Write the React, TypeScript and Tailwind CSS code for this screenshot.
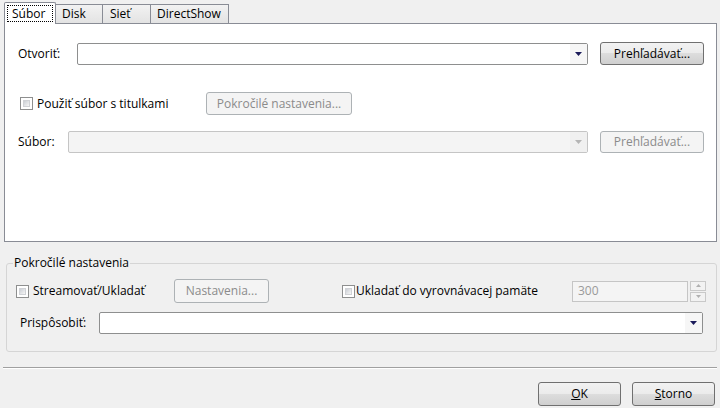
import React from "react";

const font = { fontFamily: '"Open Sans", "Noto Sans", sans-serif' };

function Arrow({ disabled }: { disabled?: boolean }) {
  return (
    <svg width="7" height="4" viewBox="0 0 7 4">
      <path d="M0 0H7L3.5 4Z" fill={disabled ? "#b5b5b5" : "#1b1b5a"} />
    </svg>
  );
}

function Combo({ w, disabled }: { w: string; disabled?: boolean }) {
  return (
    <div
      className={`${w} h-[22px] flex rounded-[2px] border ${
        disabled ? "border-[#c5c5c5] bg-[#f4f4f4]" : "border-[#8e8f8f] bg-white"
      }`}
    >
      <div className="flex-1" />
      <div
        className={`w-[17px] flex items-center justify-center ${
          disabled ? "bg-[#f0f0f0]" : "bg-[#f6f6f6]"
        }`}
      >
        <Arrow disabled={disabled} />
      </div>
    </div>
  );
}

function Btn({
  w,
  h = "h-[23px]",
  disabled,
  children,
}: {
  w: string;
  h?: string;
  disabled?: boolean;
  children: React.ReactNode;
}) {
  return (
    <div
      className={`${w} ${h} flex items-center justify-center rounded-[3px] border text-[12px] ${
        disabled
          ? "border-[#adb2b5] bg-[#f4f4f4] text-[#8b8b8b]"
          : "border-[#707070] bg-[linear-gradient(#f2f2f2_0%,#ebebeb_50%,#dddddd_50%,#cfcfcf_100%)] text-black"
      }`}
    >
      {children}
    </div>
  );
}

function Check() {
  return (
    <div className="w-[13px] h-[13px] border border-[#8e8f8f] bg-white p-[2px]">
      <div className="w-full h-full bg-[linear-gradient(135deg,#cbcfd5,#f6f6f6)] border border-[#d0d2d6]" />
    </div>
  );
}

export default function App() {
  return (
    <div
      className="w-[720px] h-[408px] bg-[#f0f0f0] text-black text-[12px] leading-none flex flex-col"
      style={font}
    >
      {/* tabs */}
      <div className="flex items-end pl-[4px] pt-[2px] h-[23px]">
        <div className="w-[52px] h-[22px] bg-white border border-b-0 border-[#898c95] rounded-t-[2px] px-[2px] pt-[2px] relative z-10 -mb-px">
          <div className="h-[17px] border border-dotted border-black flex items-center pl-[4px]">
            Súbor
          </div>
        </div>
        <div className="w-[47px] h-[19px] bg-[linear-gradient(#f2f2f2,#e3e3e3)] border border-[#898c95] border-l-0 border-b-0 flex items-center pl-[6px]">
          Disk
        </div>
        <div className="w-[48px] h-[19px] bg-[linear-gradient(#f2f2f2,#e3e3e3)] border border-[#898c95] border-l-0 border-b-0 flex items-center pl-[7px]">
          Sieť
        </div>
        <div className="w-[78px] h-[19px] bg-[linear-gradient(#f2f2f2,#e3e3e3)] border border-[#898c95] border-l-0 border-b-0 flex items-center pl-[6px]">
          DirectShow
        </div>
      </div>

      {/* panel */}
      <div className="ml-[4px] mr-[3px] h-[219px] bg-white border border-[#898c95] flex flex-col">
        <div className="flex items-center mt-[18px] pl-[13px]">
          <span className="w-[59px]">Otvoriť:</span>
          <Combo w="w-[511px]" />
          <div className="ml-[12px]">
            <Btn w="w-[104px]">Prehľadávať...</Btn>
          </div>
        </div>
        <div className="flex items-center mt-[27px] pl-[15px]">
          <Check />
          <span className="ml-[4px] w-[169px]">Použiť súbor s titulkami</span>
          <Btn w="w-[146px]" disabled>
            Pokročilé nastavenia...
          </Btn>
        </div>
        <div className="flex items-center mt-[16px] pl-[13px]">
          <span className="w-[50px]">Súbor:</span>
          <Combo w="w-[520px]" disabled />
          <div className="ml-[12px]">
            <Btn w="w-[104px]" h="h-[22px]" disabled>
              Prehľadávať...
            </Btn>
          </div>
        </div>
      </div>

      {/* group box */}
      <fieldset className="ml-[6px] mr-[3px] mt-[14px] h-[96px] border border-[#d5d5d5] rounded-[3px] pl-[9px] pr-[10px]">
        <legend className="px-[1px] -ml-[3px] text-[12px] leading-[14px]">Pokročilé nastavenia</legend>
        <div className="flex items-center mt-[9px]">
          <Check />
          <span className="ml-[4px] w-[141px]">Streamovať/Ukladať</span>
          <Btn w="w-[95px]" h="h-[24px]" disabled>
            Nastavenia...
          </Btn>
          <div className="ml-[73px] flex items-center">
            <Check />
            <span className="ml-[1px] w-[216px]">Ukladať do vyrovnávacej pamäte</span>
          </div>
          <div className="w-[116px] h-[21px] border border-[#c5c5c5] bg-[#f4f4f4] text-[#9a9a9a] flex items-center pl-[5px]">
            300
          </div>
          <div className="ml-[2px] flex flex-col gap-[1px]">
            <div className="w-[16px] h-[10px] border border-[#c9c9c9] bg-[#f2f2f2] flex items-center justify-center">
              <svg width="5" height="3" viewBox="0 0 5 3">
                <path d="M0 3H5L2.5 0Z" fill="#b0b0b0" />
              </svg>
            </div>
            <div className="w-[16px] h-[10px] border border-[#c9c9c9] bg-[#f2f2f2] flex items-center justify-center">
              <svg width="5" height="3" viewBox="0 0 5 3">
                <path d="M0 0H5L2.5 3Z" fill="#b0b0b0" />
              </svg>
            </div>
          </div>
        </div>
        <div className="flex items-center mt-[9px]">
          <span className="ml-[4px] w-[79px]">Prispôsobiť:</span>
          <Combo w="w-[604px]" />
        </div>
      </fieldset>

      {/* separator */}
      <div className="mt-[15px] mx-[3px] h-[2px] border-t border-[#a0a0a0] border-b border-b-white" />

      {/* buttons */}
      <div className="flex justify-end gap-[11px] mt-[13px] pr-[5px]">
        <Btn w="w-[83px]" h="h-[24px]">
          <span className="underline">O</span>K
        </Btn>
        <Btn w="w-[83px]" h="h-[24px]">
          <span className="underline">S</span>torno
        </Btn>
      </div>
    </div>
  );
}
